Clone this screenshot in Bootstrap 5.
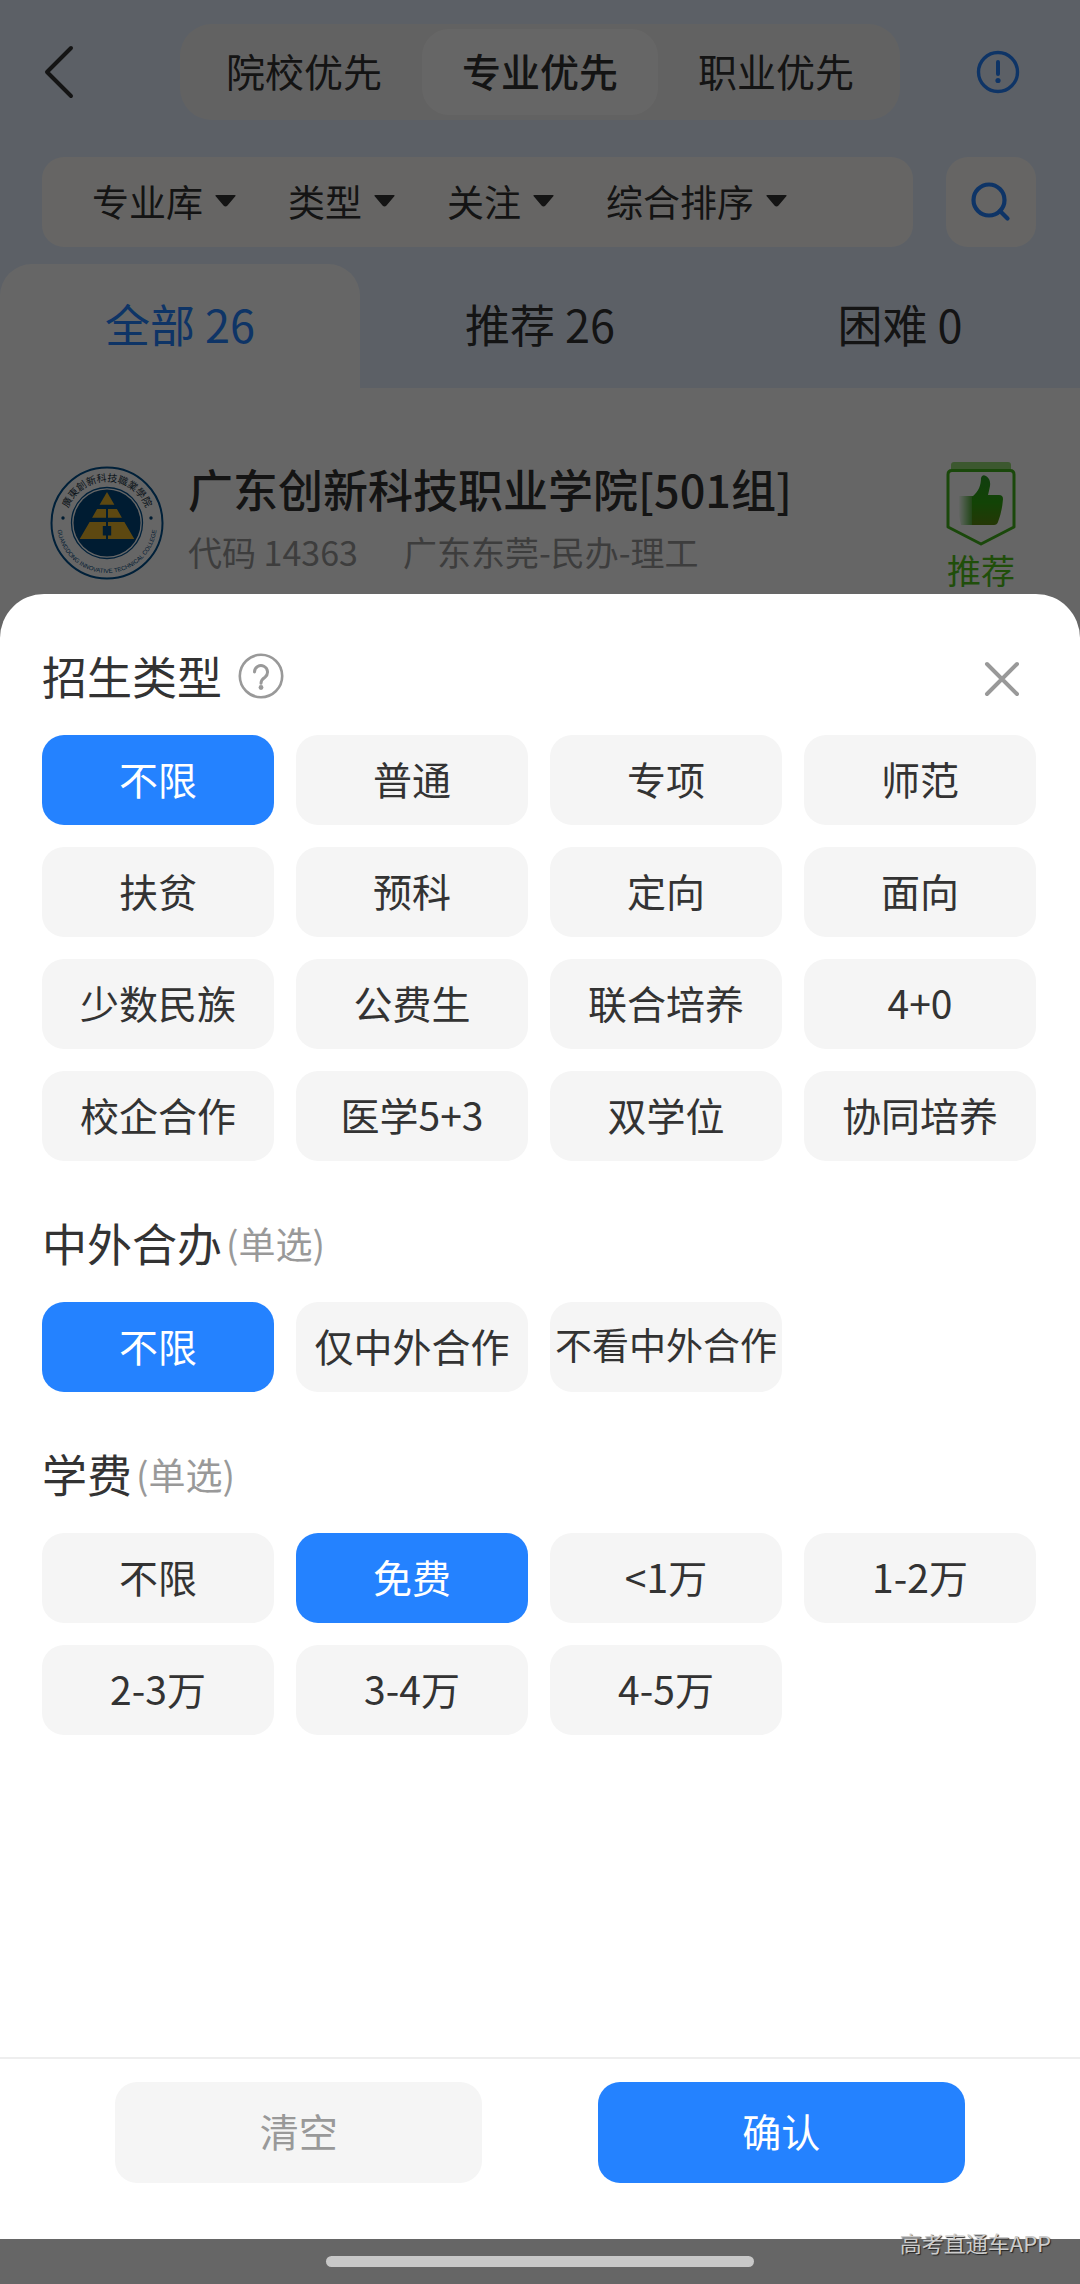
<!DOCTYPE html>
<html lang="zh-CN">
<head>
<meta charset="utf-8">
<meta name="viewport" content="width=device-width, initial-scale=1">
<title>招生类型</title>
<link href="https://cdn.jsdelivr.net/npm/bootstrap@5.3.0/dist/css/bootstrap.min.css" rel="stylesheet">
<style>
  :root { --brand: #2482ff; --ink: #333; --muted: #999; --soft: #f5f5f5; }
  body { font-family: "Noto Sans CJK SC", sans-serif; font-size: 39px; line-height: 1.5; color: var(--ink); }
  button, select { font: inherit; color: inherit; background: none; border: 0; padding: 0; }
  .topbar { background: #e6f0ff; padding-top: 24px; }
  .side { width: 16.6667%; }
  .modes { width: 66.6667%; height: 96px; padding: 5px 6px; border-radius: 32px; background: #f6f5f4; }
  .modes button { flex: 1 1 0; border-radius: 27px; padding-bottom: 4px; }
  .modes .current { background: #fff; font-weight: 500; }
  .filters { padding: 37px 44px 17px 42px; gap: 33px; }
  .filter-box { height: 90px; padding: 0 50px 2px; gap: 52px; border-radius: 22px; background: #fffdfa; font-size: 37px; }
  .filter-box label { gap: 12px; }
  .filter-box select { appearance: none; outline: 0; line-height: 56px; }
  .find { width: 90px; height: 90px; border-radius: 22px; background: #fffdfa; }
  .tabs button { flex: 1 1 0; height: 124px; padding-bottom: 4px; font-size: 45px; }
  .tabs .current { background: #fff; color: var(--brand); border-radius: 32px 32px 0 0; }
  .school { height: 206px; padding: 66px 64px 0 50px; }
  .school-name { font-size: 45px; line-height: 66px; font-weight: 500; margin: 2px 0 0; }
  .school-meta { font-size: 34px; line-height: 52px; gap: 45px; color: var(--muted); margin-top: 4px; }
  .advice { font-size: 34px; line-height: 48px; color: #52c41a; }
  .dim { background: rgba(0, 0, 0, .6); }
  .layer { z-index: 2; }
  .sheet { background: #fff; border-radius: 44px 44px 0 0; }
  .group { padding: 51px 44px 0 42px; }
  .group-title { font-size: 45px; line-height: 62px; margin: 0 0 24px; padding-bottom: 4px; font-weight: 400; }
  .hint { font-size: 37px; color: var(--muted); margin-left: 4px; }
  .chips { display: grid; grid-template-columns: repeat(4, 1fr); gap: 22px; }
  .chip { height: 90px; padding-bottom: 4px; border-radius: 22px; background: var(--soft); white-space: nowrap; cursor: pointer; }
  .chip-tight { font-size: 37px; }
  .btn-check:checked + .chip { background: var(--brand); color: #fff; }
  .actions { border-top: 2px solid #eee; padding: 23px 0 56px; }
  .actions button { width: 34%; height: 101px; padding-bottom: 4px; border-radius: 22px; }
  .actions .clear-btn { background: var(--soft); color: var(--muted); }
  .actions .ok-btn { background: var(--brand); color: #fff; }
  .gesture { height: 45px; padding-top: 17px; }
  .gesture-bar { width: 428px; height: 11px; border-radius: 6px; background: #c8c8c8; }
  .stamp { right: 29px; bottom: 25px; font-size: 22px; line-height: 33px; color: #ccc; text-shadow: 1px 1px 1px #222; }
</style>
</head>
<body>
<div class="d-flex flex-column min-vh-100 position-relative">

  <header class="topbar">
    <div class="d-flex align-items-center">
      <div class="side d-flex ps-5">
        <button type="button" aria-label="返回" class="d-flex">
          <svg width="28" height="54" viewBox="3 0 28 54" fill="none" stroke="#333" stroke-width="4" stroke-linecap="round" stroke-linejoin="round" overflow="visible"><path d="M26 3 L2 27 L26 51"/></svg>
        </button>
      </div>
      <div class="modes d-flex">
        <button type="button">院校优先</button>
        <button type="button" class="current">专业优先</button>
        <button type="button">职业优先</button>
      </div>
      <div class="side d-flex justify-content-center ps-3">
        <button type="button" aria-label="说明" class="d-flex">
          <svg width="44" height="44" viewBox="0 0 44 44" fill="none" stroke="#2482ff" stroke-width="3.4" stroke-linecap="round"><circle cx="22" cy="22" r="19.5"/><path d="M22 12v12" stroke-width="4"/><circle cx="22" cy="30.5" r="2.6" fill="#2482ff" stroke="none"/></svg>
        </button>
      </div>
    </div>

    <div class="filters d-flex">
      <div class="filter-box d-flex align-items-center flex-grow-1">
        <label class="d-flex align-items-center"><select aria-label="专业库"><option>专业库</option></select><svg width="21" height="12" viewBox="0 0 21 12" fill="#333"><path d="M1.500 0h18q2 0 .6 1.600l-7.600 8.800q-2 2-4 0L.9 1.600Q-.5 0 1.500 0z"/></svg></label>
        <label class="d-flex align-items-center"><select aria-label="类型"><option>类型</option></select><svg width="21" height="12" viewBox="0 0 21 12" fill="#333"><path d="M1.500 0h18q2 0 .6 1.600l-7.600 8.800q-2 2-4 0L.9 1.600Q-.5 0 1.500 0z"/></svg></label>
        <label class="d-flex align-items-center"><select aria-label="关注"><option>关注</option></select><svg width="21" height="12" viewBox="0 0 21 12" fill="#333"><path d="M1.500 0h18q2 0 .6 1.600l-7.600 8.800q-2 2-4 0L.9 1.600Q-.5 0 1.500 0z"/></svg></label>
        <label class="d-flex align-items-center"><select aria-label="综合排序"><option>综合排序</option></select><svg width="21" height="12" viewBox="0 0 21 12" fill="#333"><path d="M1.500 0h18q2 0 .6 1.600l-7.600 8.800q-2 2-4 0L.9 1.600Q-.5 0 1.500 0z"/></svg></label>
      </div>
      <button type="button" class="find d-flex align-items-center justify-content-center" aria-label="搜索">
        <svg width="40" height="40" viewBox="0 0 40 40" fill="none" stroke="#2482ff" stroke-width="4.200" stroke-linecap="round"><circle cx="18" cy="18" r="15.500"/><path d="M29 29l7.500 7.500"/></svg>
      </button>
    </div>

    <nav class="tabs d-flex">
      <button type="button" class="current">全部 26</button>
      <button type="button">推荐 26</button>
      <button type="button">困难 0</button>
    </nav>
  </header>

  <section class="school d-flex align-items-start">
    <svg class="mt-2 flex-shrink-0" width="114" height="124" viewBox="-1 -4 114 124" role="img" aria-label="校徽">
      <circle cx="56" cy="57" r="55.500" fill="#fff" stroke="#00508f" stroke-width="2"/>
      <circle cx="56" cy="57" r="35.500" fill="none" stroke="#00508f" stroke-width="1.300"/>
      <circle cx="56" cy="57" r="33.500" fill="#00467d"/>
      <g fill="#e9b52c">
        <path d="M56 26 63.400 38.700H48.600z"/>
        <path d="M46.100 43H55V51.700H41.100zM57 43H65.900L70.900 51.700H57z"/>
        <path d="M38.600 56H55V60H51.800V69.500H55V73H28.700zM57 56H73.400L83.300 73H57V69.500H60.200V60H57z"/>
      </g>
      <circle cx="12" cy="52" r="1.700" fill="#00467d"/><circle cx="100" cy="52" r="1.700" fill="#00467d"/>
      <path id="arcTop" d="M14.500 57a41.500 41.500 0 0 1 83 0" fill="none"/>
      <path id="arcLow" d="M6 57a50 50 0 0 0 100 0" fill="none"/>
      <text font-size="10" fill="#234"><textPath href="#arcTop" startOffset="50%" text-anchor="middle">廣東創新科技職業學院</textPath></text>
      <text font-size="6" fill="#00467d" font-family="Liberation Sans Narrow, Liberation Sans, sans-serif"><textPath href="#arcLow" startOffset="50%" text-anchor="middle">GUANGDONG INNOVATIVE TECHNICAL COLLEGE</textPath></text>
    </svg>
    <div class="flex-grow-1 ps-4">
      <h2 class="school-name">广东创新科技职业学院[501组]</h2>
      <div class="school-meta d-flex"><span>代码 14363</span><span>广东东莞-民办-理工</span></div>
    </div>
    <div class="advice d-flex flex-column align-items-center">
      <svg class="mt-2" width="70" height="84" viewBox="0 0 70 84">
        <defs>
          <linearGradient id="thumbFill" x1="0" y1="0" x2="0" y2="1"><stop offset="0" stop-color="#2a9c26"/><stop offset=".55" stop-color="#2fa810"/><stop offset="1" stop-color="#5c8a10"/></linearGradient>
          <linearGradient id="trail" x1="0" x2="1"><stop offset="0" stop-color="#3cb82a" stop-opacity="0"/><stop offset="1" stop-color="#3c9e1c"/></linearGradient>
        </defs>
        <path d="M8 0h54q3 0 3 3v7H5V3q0-3 3-3z" fill="#52c41a" opacity=".6"/>
        <path d="M6 8.500h58q4 0 4 4V65L35 82 2 65V12.500q0-4 4-4z" fill="#fff" stroke="#43b41c" stroke-width="3" stroke-linejoin="round"/>
        <path d="M13 34h15v29H15q-4-14-2-29z" fill="url(#trail)"/>
        <path d="M26 35C33 29 35 23 35 16q1-4 5-2 5 3 4 10-1 5-2 9h11q4 0 4 4-1 13-5 23-1 3-4 3H26z" fill="url(#thumbFill)"/>
      </svg>
      <span>推荐</span>
    </div>
  </section>

  <div class="dim position-absolute top-0 start-0 w-100 h-100"></div>

  <main class="layer sheet position-relative flex-grow-1 d-flex flex-column">
    <section class="group">
      <div class="d-flex justify-content-between align-items-start">
        <h1 class="group-title d-flex align-items-center">招生类型
          <button type="button" class="d-flex ms-3" aria-label="帮助">
            <svg width="46" height="46" viewBox="0 0 46 46"><circle cx="23" cy="23" r="21.200" fill="none" stroke="#999" stroke-width="2.600"/><path d="M16.500 19a6.500 6.500 0 1 1 10.500 5.200q-4 2.600-4 6" fill="none" stroke="#999" stroke-width="3" stroke-linecap="round"/><circle cx="23" cy="34.500" r="2.400" fill="#999"/></svg>
          </button>
        </h1>
        <button type="button" class="d-flex pt-3 me-3" aria-label="关闭">
          <svg width="36" height="36" viewBox="0 0 36 36" stroke="#999" stroke-width="4" stroke-linecap="round"><path d="M3 3l30 30M33 3L3 33"/></svg>
        </button>
      </div>
      <div class="chips" id="kinds"></div>
    </section>

    <section class="group">
      <h2 class="group-title d-flex align-items-center">中外合办<span class="hint">(单选)</span></h2>
      <div class="chips" id="joint"></div>
    </section>

    <section class="group">
      <h2 class="group-title d-flex align-items-center">学费<span class="hint">(单选)</span></h2>
      <div class="chips" id="fees"></div>
    </section>

    <div class="actions d-flex justify-content-evenly mt-auto">
      <button type="button" class="clear-btn">清空</button>
      <button type="button" class="ok-btn">确认</button>
    </div>
  </main>

  <footer class="layer gesture position-relative">
    <div class="gesture-bar mx-auto"></div>
    <span class="stamp position-absolute">高考直通车APP</span>
  </footer>
</div>

<script src="https://cdn.jsdelivr.net/npm/bootstrap@5.3.0/dist/js/bootstrap.bundle.min.js"></script>
<script>
  // Fills a chip grid with real inputs, each followed by its label.
  function fillChips(id, type, names, chosen) {
    const box = document.getElementById(id);
    names.forEach(function (name, i) {
      const input = document.createElement('input');
      input.type = type; input.name = id; input.id = id + i;
      input.className = 'btn-check'; input.checked = name === chosen;
      const label = document.createElement('label');
      label.htmlFor = input.id; label.textContent = name;
      label.className = 'chip d-flex align-items-center justify-content-center' + (name.length > 5 ? ' chip-tight' : '');
      box.append(input, label);
    });
  }
  fillChips('kinds', 'checkbox', ['不限', '普通', '专项', '师范', '扶贫', '预科', '定向', '面向', '少数民族', '公费生', '联合培养', '4+0', '校企合作', '医学5+3', '双学位', '协同培养'], '不限');
  fillChips('joint', 'radio', ['不限', '仅中外合作', '不看中外合作'], '不限');
  fillChips('fees', 'radio', ['不限', '免费', '<1万', '1-2万', '2-3万', '3-4万', '4-5万'], '免费');
</script>
</body>
</html>
